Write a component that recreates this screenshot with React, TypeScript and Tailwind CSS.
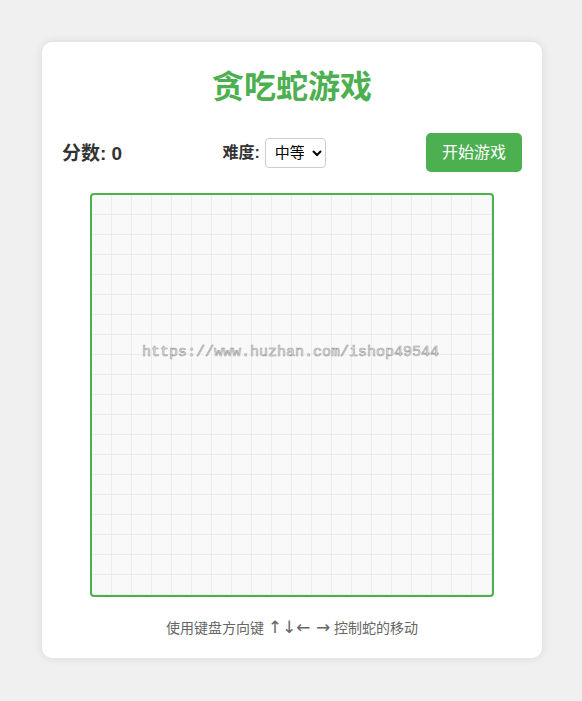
import { useState } from "react";

const font = "font-['Liberation_Sans','Noto_Sans_CJK_SC',sans-serif]";

export default function App() {
  const [level, setLevel] = useState("medium");

  return (
    <div className={`min-h-screen bg-[#f0f0f0] pt-[42px] ${font}`}>
      <div className="ml-[42px] w-[500px] rounded-[10px] bg-white p-5 shadow-[0_0_10px_rgba(0,0,0,0.1)]">
        <h1 className="text-center text-[32px] font-bold leading-[50px] text-[#4CAF50]">
          贪吃蛇游戏
        </h1>

        <div className="mt-[21px] flex h-[39px] items-center justify-between">
          <div className="pt-[3px] text-[19px] font-bold text-[#333]">分数: 0</div>
          <div className="flex items-center gap-[5px]">
            <label className="pt-[1px] text-[16px] font-bold text-[#333]">难度:</label>
            <select
              value={level}
              onChange={(e) => setLevel(e.target.value)}
              className="h-[30px] w-[61px] rounded-[4px] border border-[#ccc] bg-white px-[5px] text-[15px] text-black"
            >
              <option value="easy">简单</option>
              <option value="medium">中等</option>
              <option value="hard">困难</option>
            </select>
          </div>
          <button
            type="button"
            className="h-[39px] w-[96px] rounded-[5px] bg-[#4CAF50] text-[16px] text-white"
          >
            开始游戏
          </button>
        </div>

        <div className="mt-[21px] flex justify-center">
          <div className="relative h-[404px] w-[404px] rounded-[4px] border-2 border-[#4CAF50] bg-[#f9f9f9] bg-[linear-gradient(#ececec_1px,transparent_1px),linear-gradient(90deg,#ececec_1px,transparent_1px)] bg-[size:20px_20px] bg-[position:-1px_-1px]">
            <div className="absolute left-[50px] top-[147px] font-['Liberation_Mono',monospace] text-[15px] text-[#f4f4f4] [-webkit-text-stroke:0.6px_#9a9a9a]">
              https://www.huzhan.com/ishop49544
            </div>
          </div>
        </div>

        <p className="mt-[21px] text-center text-[14px] leading-[19px] text-[#666]">
          使用键盘方向键{" "}
          <span className="font-['DejaVu_Sans',sans-serif] text-[17px]">↑↓← →</span>{" "}
          控制蛇的移动
        </p>
      </div>
    </div>
  );
}
